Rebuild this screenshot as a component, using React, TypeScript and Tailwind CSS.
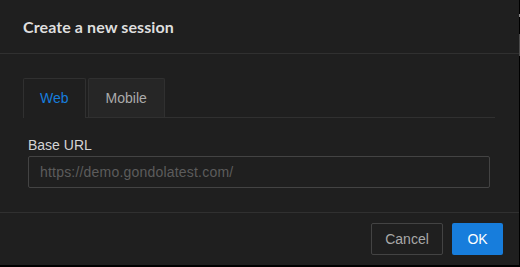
import React, { useState } from 'react';

const tabs = ['Web', 'Mobile'];

export default function App() {
  const [active, setActive] = useState('Web');
  const [baseUrl, setBaseUrl] = useState('');

  return (
    <div
      className="flex w-[520px] h-[267px] bg-black"
      style={{ fontFamily: '"Liberation Sans", Arial, sans-serif' }}
    >
      <div className="flex flex-col w-[519px] h-[265px] bg-[#1f1f1f]">
        {/* header */}
        <div className="flex items-center h-[54px] pl-[23px] border-b border-[#303030]">
          <h2 className="text-[16px] font-bold tracking-[0.1px] text-[#dedede] font-['Lato',sans-serif]">
            Create a new session
          </h2>
        </div>

        {/* body */}
        <div className="pt-[24px] pl-[23px] pr-[24px] h-[159px] border-b border-[#303030]">
          <div className="flex items-end h-[40px] border-b border-[#303030]">
            {tabs.map((tab) => (
              <button
                key={tab}
                onClick={() => setActive(tab)}
                className={
                  tab === active
                    ? 'h-[40px] px-[16px] mr-[2px] -mb-px text-[14px] text-[#177ddc] bg-[#1f1f1f] border border-b-0 border-[#303030] rounded-t-[2px]'
                    : 'h-[39px] px-[17px] mr-[2px] text-[14px] text-[#ababab] bg-[#262626] border border-b-0 border-[#303030] rounded-t-[2px]'
                }
              >
                {tab}
              </button>
            ))}
          </div>

          <div className="px-[5px] pt-[16px]">
            <label className="block h-[22px] leading-[22px] text-[14px] text-[#d4d4d4]">Base URL</label>
            <input
              type="text"
              placeholder="https://demo.gondolatest.com/"
              className="w-full h-[32px] px-[11px] text-[14px] tracking-[0.2px] text-[#dedede] bg-transparent border border-[#434343] rounded-[2px] outline-none placeholder:text-[#5c5c5c]"
              value={baseUrl}
              onChange={(e) => setBaseUrl(e.target.value)}
            />
          </div>
        </div>

        {/* footer */}
        <div className="flex justify-end items-center gap-[9px] flex-1 pr-[16px]">
          <button className="h-[32px] w-[72px] text-[14px] text-[#a8a8a8] border border-[#434343] rounded-[2px]">
            Cancel
          </button>
          <button className="h-[32px] w-[51px] text-[14px] text-white bg-[#177ddc] rounded-[2px]">
            OK
          </button>
        </div>
      </div>

      <div className="flex flex-col w-px">
        <div className="h-[14px]" />
        <div className="h-[3px] bg-[#888]" />
        <div className="h-[17px]" />
        <div className="h-[22px] bg-[#4a4a4a]" />
      </div>
    </div>
  );
}
